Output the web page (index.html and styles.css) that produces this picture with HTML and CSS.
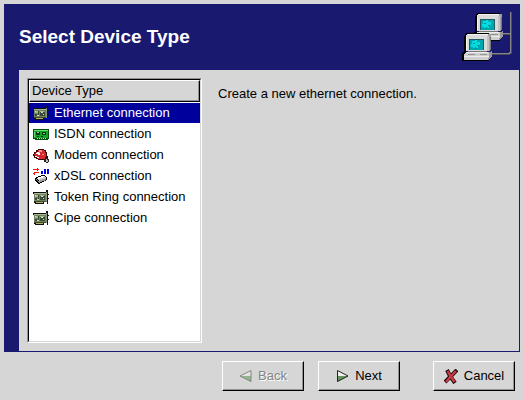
FILE: index.html
```html
<!DOCTYPE html>
<html lang="en">
<head>
<meta charset="utf-8">
<title>Select Device Type</title>
<link rel="stylesheet" href="styles.css">
</head>
<body>
<svg class="defs" aria-hidden="true">
  <symbol id="card" viewBox="0 0 16 16">
    <path fill="#111" d="M0 3h13V1h2v4h1v1h-1v3h1v1h-1v5h-1v-2h-3v2H2v-1H1V5H0z"/>
    <path fill="#718260" d="M1 4h12v9H1z"/>
    <path fill="#a9b78f" d="M1 4h12v1H1zM2 6h3v2H2zM7 6h4v1H7z"/>
    <path fill="#354a30" d="M5 6h1v4H5zM7 7h5v4H7zM2 9h2v2H2zM1 12h12v1H1z"/>
    <path fill="#d3dcc0" d="M8 7h2v1H8zM4 10h2v1H4zM10 9h1v1h-1zM2 6h1v1H2z"/>
    <path fill="#b7ab67" d="M3 13h7v1H3z"/>
    <path fill="#8a9480" d="M13 3h1v10h-1z"/>
  </symbol>
</svg>
<main class="druid">
  <header class="banner">
    <h1>Select Device Type</h1>
    <svg class="logo" viewBox="0 0 52 54" aria-hidden="true">
      <path fill="#858585" d="M48 2h1v41h-1v1H29v-1h18v-1h1zM40 23h8v1h-8z"/>
      <path fill="#4c4c58" d="M49 2h1v42h-2v1H30v-1h18v-1h1zM40 24h8v1h-8z"/>
      <g id="computer">
        <path fill="#000" d="M13 6h1V4l2-1h22v1H16v17h-1v8h23v2H11v-7l2-3z"/>
        <path fill="#a2a2a2" d="M17 4h22l1 1v15l-2 1H16z"/>
        <path fill="#dadada" d="M15 6l1-2h21v2h-1v15H15z"/>
        <path fill="#f5f5f5" d="M17 4h20v1H17zM15 7h1v13h-1z"/>
        <path fill="#c2c2c2" d="M36 6h2v15h-2z"/>
        <path fill="#777" d="M39 7h1v13h-1zM17 21h19v1H17z"/>
        <path fill="#245c66" d="M18 9h15v11H18z"/>
        <path fill="#00a8ae" d="M19 10h13v10H19z"/>
        <path fill="#00dce0" d="M21 11h3v-1h2v2h3v3h-2v3h-5v-1h-2v-3h1z"/>
        <path fill="#008f98" d="M22 13h2v1h-2zM26 15h2v1h-2zM24 17h1v2h-1z"/>
        <path fill="#999" d="M15 22h24l2-1v5l-3 4H13z"/>
        <path fill="#cfcfcf" d="M15 22h23v4l-1 4H13v-5z"/>
        <path fill="#ededed" d="M15 22h22v1H15zM13 26h25v1H13z"/>
        <path fill="#929292" d="M17 24h7v1h-7zM29 24h7v1h-7zM38 26h1v3h-1z"/>
      </g>
      <use href="#computer" x="-11" y="20"/>
    </svg>
  </header>
  <section class="content">
    <div class="list">
      <table>
        <thead><tr><th scope="col">Device Type</th></tr></thead>
        <tbody>
          <tr class="selected" aria-selected="true"><td><div class="item"><svg class="icon"><use href="#card"/></svg>Ethernet connection</div></td></tr>
          <tr><td><div class="item"><svg class="icon" viewBox="0 0 16 16">
            <path fill="#064f0c" d="M0 3h16v10h-1v1H2v-1H0z"/><path fill="#15a629" d="M1 4h14v8H1z"/>
            <path fill="#64df6a" d="M1 4h14v1H1zM1 6h1v5H1z"/><path fill="#073b13" d="M3 6h4v3H3zM9 6h4v3H9zM4 10h2v1H4zM8 10h2v1H8z"/>
            <path fill="#98b8a0" d="M4 6h2v1H4zM10 7h2v1h-2z"/><path fill="#d6e46d" d="M4 12h1v1H4zM6 12h1v1H6zM8 12h1v1H8zM10 12h1v1h-1zM12 12h1v1h-1z"/>
          </svg>ISDN connection</div></td></tr>
          <tr><td><div class="item"><svg class="icon" viewBox="0 0 16 16">
            <path fill="#390808" d="M5 2h6v1h2v2h1v4h1v3h-3v1H5v-1H3v-1H1V9H0V7h1V5h2V3h2z"/>
            <path fill="#d62631" d="M6 3h5v1h1v2h1v4h-1v2H6l-3-2-2-2 2-3h2V3z"/><path fill="#ff8d8d" d="M6 3h3v2H7v1H5V5h1zM9 7h2v1H9z"/>
            <path fill="#fff" d="M4 5h2v1h1v2H5V7H3V6h1zM2 9h2v1h2v1H4v-1H2z"/><path fill="#222" d="M12 11h3v1h1v3h-1v1h-2v-1h-2v-2h1z"/><path fill="#bbb" d="M13 12h1v1h1v2h-2z"/>
          </svg>Modem connection</div></td></tr>
          <tr><td><div class="item"><svg class="icon" viewBox="0 0 16 16">
            <path fill="#f01818" d="M0 1h4V0h1v1h1v1H5v1H4V2H0zM2 4h4v1H2v2H1V6H0V5h1V4z"/><path fill="#0000e8" d="M8 3h2v3H8zM11 1h2v5h-2zM14 1h2v5h-2z"/>
            <path fill="#000" d="M2 10l7-3h2l3 3v2l-8 4H5l-3-3z"/><path fill="#ccc" d="M3 10l6-2h2l2 2-7 3z"/><path fill="#fff" d="M4 10l5-2h1l1 1-6 2z"/><path fill="#999" d="M3 11l3 2 7-3v2l-7 3-3-3z"/><path fill="#e22" d="M4 12h1v1H4z"/>
          </svg>xDSL connection</div></td></tr>
          <tr><td><div class="item"><svg class="icon"><use href="#card"/></svg>Token Ring connection</div></td></tr>
          <tr><td><div class="item"><svg class="icon"><use href="#card"/></svg>Cipe connection</div></td></tr>
        </tbody>
      </table>
    </div>
    <p>Create a new ethernet connection.</p>
  </section>
</main>
<footer class="actions">
  <button type="button" disabled><svg class="arrow" viewBox="0 0 13 12" aria-hidden="true"><path fill="#e1e8df" d="M12 0v6H0z"/><path fill="#93b58d" d="M1 6h11v6z"/><path fill="none" stroke="#858585" d="M12 .5v11L1 6z"/></svg>Back</button>
  <button type="button"><svg class="arrow" viewBox="0 0 13 12" aria-hidden="true"><path fill="#eef3ec" d="M1 0v6h11z"/><path fill="#67955e" d="M1 6h11L1 12z"/><path fill="none" stroke="#222" d="M1.500 .5v11L12 6z"/></svg>Next</button>
  <button type="button" class="cancel"><svg class="cross" viewBox="0 0 14 15" aria-hidden="true"><path fill="none" stroke="#210a0b" stroke-width="4" d="M3 1l3 6 5 7M13 1L7 7l-6 6"/><path fill="none" stroke="#c73c45" stroke-width="2.400" d="M3.500 2l3 5 4 6M12 2L7 7l-5 6"/></svg>Cancel</button>
</footer>
</body>
</html>
```

FILE: styles.css
```css
* { box-sizing: border-box; }
body {
  margin: 0;
  min-height: 100vh;
  padding: 4px 4px 9px;
  display: flex;
  flex-direction: column;
  gap: 9px;
  background: #d6d6d6;
  color: #000;
  font: 13px/20px "Liberation Sans", Arial, sans-serif;
}
.defs { display: none; }
.druid {
  flex: 1;
  display: flex;
  flex-direction: column;
  border: solid #191970;
  border-width: 0 1px 1px 15px;
}
.banner {
  height: 66px;
  display: flex;
  align-items: center;
  justify-content: space-between;
  padding-right: 5px;
  background: #191970;
}
h1 { margin: 0; color: #fff; font-size: 19px; line-height: 24px; }
.logo { width: 52px; height: 54px; shape-rendering: crispEdges; }
.content { flex: 1; display: flex; gap: 16px; padding: 8px; }
.list {
  width: 175px;
  border: 1px solid;
  border-color: #949494 #fff #fff #949494;
  background: #fff;
  display: flex;
}
table {
  width: 100%;
  align-self: stretch;
  display: block;
  border: 1px solid;
  border-color: #000 #d6d6d6 #d6d6d6 #000;
  border-spacing: 0;
}
thead, tbody, tr, th, td { display: block; padding: 0; }
th {
  height: 22px;
  padding-left: 2px;
  background: #d6d6d6;
  border: 1px solid;
  border-color: #fff #000 #000 #fff;
  box-shadow: inset -1px -1px #949494;
  font-weight: normal;
  text-align: left;
}
tbody { padding-top: 1px; }
.item { display: flex; align-items: center; gap: 5px; height: 20px; margin-bottom: 1px; padding-left: 4px; }
.selected .item { background: #00009c; color: #fff; }
.icon { width: 16px; height: 16px; flex: none; shape-rendering: crispEdges; }
p { margin: 0; padding-top: 6px; }
.actions { display: flex; justify-content: flex-end; gap: 14px; padding-right: 5px; }
button {
  width: 82px;
  height: 30px;
  padding: 0;
  display: flex;
  align-items: center;
  justify-content: center;
  gap: 6px;
  border: 1px solid;
  border-color: #fff #000 #000 #fff;
  box-shadow: inset -1px -1px #949494;
  background: #d6d6d6;
  color: #000;
  font: inherit;
}
button:disabled { color: #858585; text-shadow: 1px 1px #fff; }
.arrow { width: 13px; height: 12px; }
.cross { width: 14px; height: 15px; }
.cancel { margin-left: 19px; }
```
